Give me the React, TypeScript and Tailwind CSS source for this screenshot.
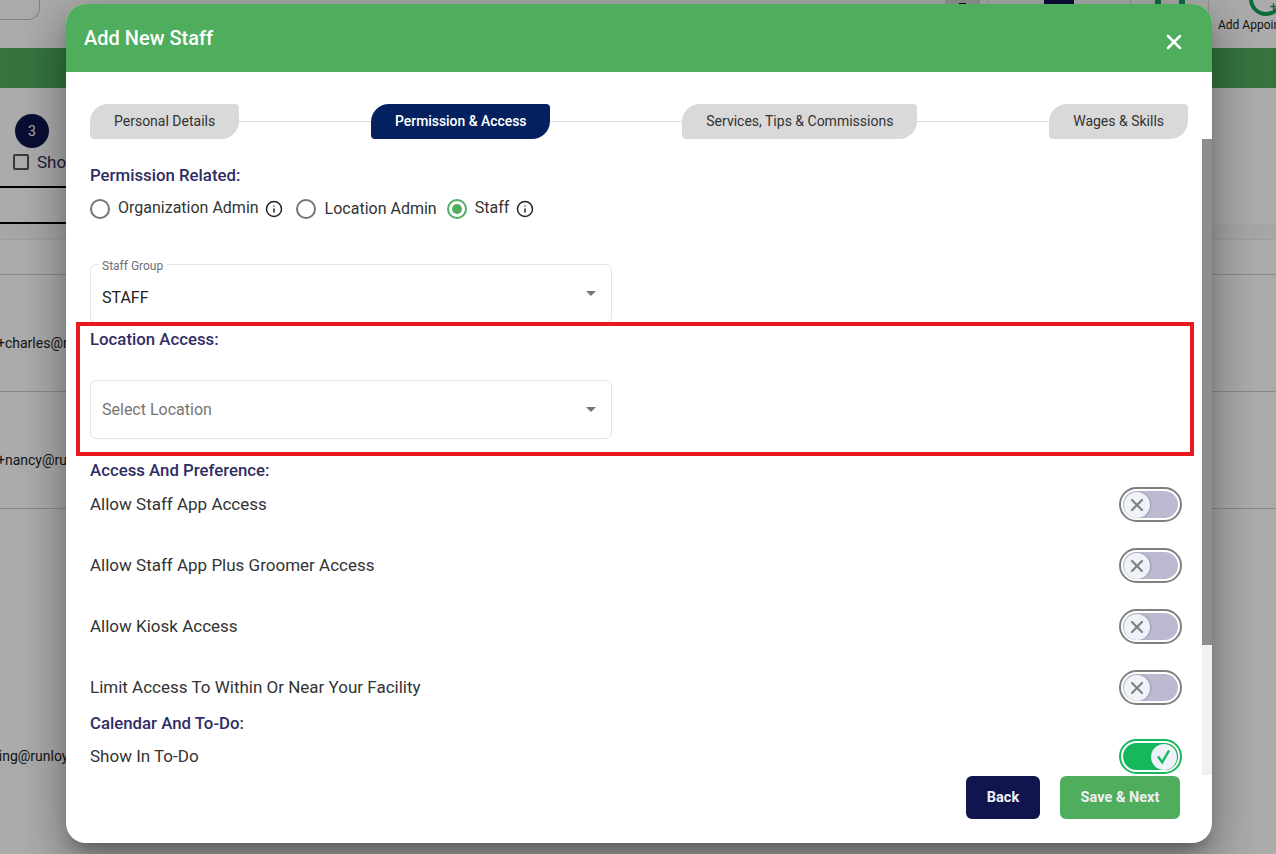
import { Fragment } from "react";
import { Info, Plus, X } from "lucide-react";

const STEPS = [
  { label: "Personal Details", active: false },
  { label: "Permission & Access", active: true },
  { label: "Services, Tips & Commissions", active: false },
  { label: "Wages & Skills", active: false },
];

const ACCESS_ROWS = [
  "Allow Staff App Access",
  "Allow Staff App Plus Groomer Access",
  "Allow Kiosk Access",
  "Limit Access To Within Or Near Your Facility",
];

function Toggle({ on = false }: { on?: boolean }) {
  return (
    <div
      className={`flex h-[35px] w-[63px] shrink-0 items-center rounded-full border-2 p-[2px] ${
        on ? "border-[#16b85e]" : "border-[#808080]"
      }`}
    >
      <div
        className={`flex h-[27px] w-full items-center rounded-full px-[1px] ${
          on ? "justify-end bg-[#16b85e]" : "justify-start bg-[#bdb9d0]"
        }`}
      >
        <div className="flex size-[26px] items-center justify-center rounded-full bg-[#eef3f9] shadow-[1px_0_2px_rgba(0,0,0,0.2)]">
          {on ? (
            <svg width="26" height="26" viewBox="0 0 26 26" fill="none" className="text-[#16b85e]">
              <path d="M7 12.5 11.2 18.3 18 6.5" stroke="currentColor" strokeWidth="2.4" />
            </svg>
          ) : (
            <X size={20} strokeWidth={2.6} className="text-[#808080]" />
          )}
        </div>
      </div>
    </div>
  );
}

function Radio({ checked = false }: { checked?: boolean }) {
  return (
    <span
      className={`flex size-5 shrink-0 items-center justify-center rounded-full border-2 ${
        checked ? "border-[#4fad5e]" : "border-[#757575]"
      }`}
    >
      {checked && <span className="size-[10px] rounded-full bg-[#4fad5e]" />}
    </span>
  );
}

function Heading({ children }: { children: string }) {
  return <h3 className="text-[16.8px] leading-5 font-medium text-[#2f2d63]">{children}</h3>;
}

function SelectBox({ label, value }: { label?: string; value: string }) {
  return (
    <div className="relative flex h-[59px] w-[522px] items-center justify-between rounded-md border border-[#e3e3e3] pr-[15px] pl-[11px]">
      {label && (
        <span className="absolute -top-[6px] left-[7px] bg-white px-1 text-xs leading-[14px] text-[#6f6f6f]">{label}</span>
      )}
      <span className={`text-base ${label ? "mt-[8px] text-[#222222]" : "text-[#757575]"}`}>{value}</span>
      <span className="h-0 w-0 border-x-[5px] border-t-[5px] border-x-transparent border-t-[#757575]" />
    </div>
  );
}

// page behind the dialog, only the slivers round the modal show
function BackgroundPage() {
  return (
    <div className="h-[854px] overflow-hidden bg-white text-[#222222]">
      <div className="flex h-12 items-start justify-between">
        <div className="h-5 w-10 rounded-br-xl border-r border-b border-[#b9c4d6]" />
        <div className="flex h-12">
          <div className="mr-[7px] flex h-3 w-[35px] justify-center bg-[#dddddd]">
            <div className="h-[5px] w-[7px] border-b-2 border-black" />
          </div>
          <div className="flex h-12 w-[143px] justify-center border-l border-[#dddddd]">
            <div className="h-[6px] w-[30px] bg-[#10164d]" />
          </div>
          <div className="flex h-12 w-[78px] justify-center border-l border-[#dddddd]">
            <div className="h-[6px] w-[30px] border-x-[6px] border-[#16a05a]" />
          </div>
          <div className="w-[68px] overflow-hidden border-l border-[#dddddd] pl-[9px]">
            <div className="-mt-[18px] ml-[31px] flex size-[34px] items-end justify-end rounded-full border-4 border-[#16a05a] p-px">
              <Plus size={9} strokeWidth={4} className="text-[#16a05a]" />
            </div>
            <p className="mt-[2px] text-[12px] leading-[14px] whitespace-nowrap">Add Appointment</p>
          </div>
        </div>
      </div>
      <div className="h-10 bg-[#4fad5e]" />
      <div className="h-[98px] pt-[26px] pl-[15px]">
        <div className="flex size-[34px] items-center justify-center rounded-full bg-[#10164d] text-sm text-white">3</div>
        <div className="-ml-[2px] flex items-center gap-2 pt-[5px] text-[17px] leading-[18px] text-[#2f2d63]">
          <span className="size-4 rounded-[2px] border-2 border-[#555555]" />
          Show
        </div>
      </div>
      <div className="h-[38px] w-[100px] border-y-2 border-black" />
      <div className="h-[15px] bg-[#f8f8f8]" />
      <div className="h-[35px] border-t border-[#eeeeee]" />
      <div className="flex h-[117px] items-center border-t border-[#cccccc] pt-5 text-sm whitespace-nowrap">
        <span className="-ml-[3px]">+charles@runloyal.com</span>
      </div>
      <div className="flex h-[117px] items-center border-t border-[#cccccc] pt-5 text-sm whitespace-nowrap">
        <span className="-ml-[3px]">+nancy@runloyal.com</span>
      </div>
      <div className="flex h-[247px] items-center border-t border-[#cccccc] pt-[247px] text-sm whitespace-nowrap">
        <span className="-ml-[29px]">training@runloyal.com</span>
      </div>
      <p className="pl-[195px] text-sm leading-5">RunLoyal Training</p>
    </div>
  );
}

export default function App() {
  return (
    <div className="relative h-[854px] overflow-hidden font-['Roboto',sans-serif]">
      <BackgroundPage />
      <div className="absolute inset-0 bg-black/[.33]" />

      <div className="absolute top-1 left-[66px] flex h-[839px] w-[1146px] flex-col overflow-hidden rounded-[20px] bg-white shadow-[0_11px_15px_-7px_rgba(0,0,0,0.28),0_24px_38px_3px_rgba(0,0,0,0.18),0_9px_46px_8px_rgba(0,0,0,0.16)]">
        <header className="flex h-[68px] shrink-0 items-start justify-between bg-[#4fad5e] pt-[21px] pr-[26px] pl-[18px]">
          <h2 className="text-xl leading-[26px] font-medium text-white">Add New Staff</h2>
          <X size={24} strokeWidth={2.5} className="mt-[5px] text-white" />
        </header>

        <div className="flex shrink-0 items-center px-6 pt-8">
          {STEPS.map((step, i) => (
            <Fragment key={step.label}>
              {i > 0 && <div className="h-px flex-1 bg-[#dddddd]" />}
              <div
                className={`flex h-[35px] items-center rounded-tl-[18px] rounded-tr-[4px] rounded-br-[18px] rounded-bl-[4px] px-6 pb-px whitespace-nowrap ${
                  step.active ? "bg-[#03215f] text-[13.9px] font-medium text-white" : "bg-[#d9d9d9] text-sm text-[#333333]"
                }`}
              >
                {step.label}
              </div>
            </Fragment>
          ))}
        </div>

        <div className="flex min-h-0 flex-1">
          <div className="min-w-0 flex-1 overflow-hidden pt-[26px] pr-[20px] pl-6">
            <Heading>Permission Related:</Heading>
            <div className="mt-[14px] flex h-5 items-center text-base text-[#333333]">
              <Radio />
              <span className="ml-2 -translate-y-px">Organization Admin</span>
              <Info size={18} className="ml-[6px] text-[#222222]" />
              <span className="ml-[13px]"><Radio /></span>
              <span className="ml-[9px]">Location Admin</span>
              <span className="ml-[10px]"><Radio checked /></span>
              <span className="ml-2 -translate-y-px">Staff</span>
              <Info size={18} className="ml-[7px] text-[#222222]" />
            </div>

            <div className="mt-[45px]">
              <SelectBox label="Staff Group" value="STAFF" />
            </div>

            <div className="mt-[6px]">
              <Heading>Location Access:</Heading>
            </div>
            <div className="mt-[31px]">
              <SelectBox value="Select Location" />
            </div>

            <div className="mt-[21px]">
              <Heading>Access And Preference:</Heading>
            </div>
            <div className="mt-[7px] flex flex-col gap-[26px]">
              {ACCESS_ROWS.map((row) => (
                <div key={row} className="flex h-[35px] items-center justify-between text-[17px] text-[#333333]">
                  <span>{row}</span>
                  <Toggle />
                </div>
              ))}
            </div>

            <div className="mt-[8px]">
              <Heading>Calendar And To-Do:</Heading>
            </div>
            <div className="mt-[6px] flex h-[35px] items-center justify-between text-[17px] text-[#333333]">
              <span>Show In To-Do</span>
              <Toggle on />
            </div>
          </div>
          <div className="w-[10px] shrink-0 bg-[#f1f1f1]">
            <div className="h-[506px] bg-[#8d8d8d]" />
          </div>
        </div>

        <footer className="flex h-[68px] shrink-0 items-start justify-end gap-5 pt-px pr-8">
          <button className="h-[43px] w-[74px] rounded-md bg-[#10164d] text-[14.5px] font-bold text-[#f0f0f5]">Back</button>
          <button className="h-[43px] w-[120px] rounded-md bg-[#4fad5e] text-[14.5px] font-bold text-[#f0f0f5]">Save &amp; Next</button>
        </footer>
      </div>

      {/* red annotation drawn over the screenshot */}
      <div className="absolute top-[322px] left-[76px] h-[134px] w-[1118px] border-4 border-[#e8191f]" />
    </div>
  );
}
